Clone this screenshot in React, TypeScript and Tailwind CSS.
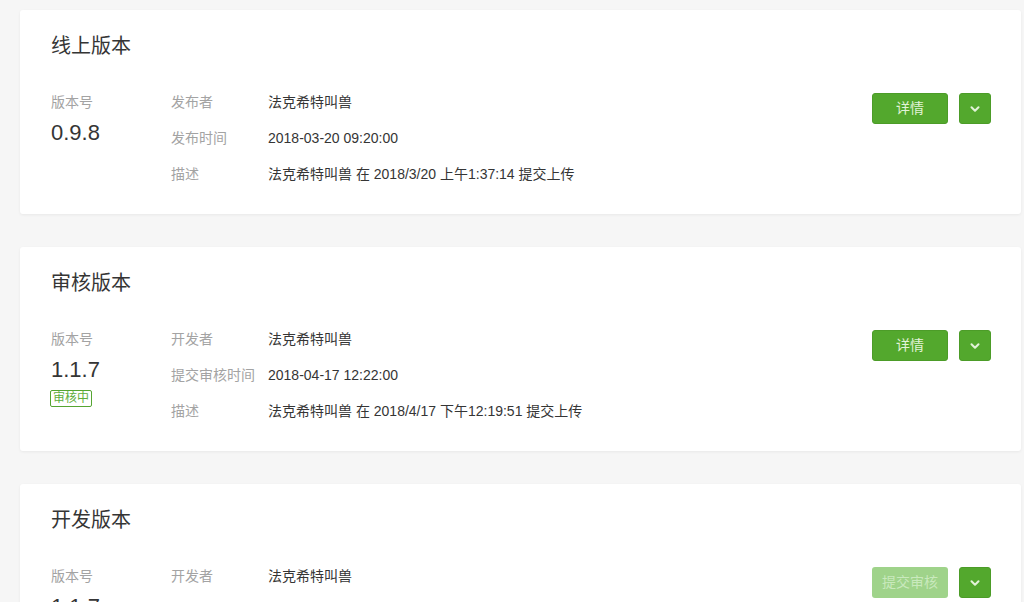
import React from 'react';
import { ChevronDown } from 'lucide-react';

interface Row {
  label: string;
  value: string;
}

interface VersionCard {
  title: string;
  version: string;
  badge?: string;
  rows: Row[];
  action: string;
  disabled?: boolean;
}

const cards: VersionCard[] = [
  {
    title: '线上版本',
    version: '0.9.8',
    rows: [
      { label: '发布者', value: '法克希特叫兽' },
      { label: '发布时间', value: '2018-03-20 09:20:00' },
      { label: '描述', value: '法克希特叫兽 在 2018/3/20 上午1:37:14 提交上传' },
    ],
    action: '详情',
  },
  {
    title: '审核版本',
    version: '1.1.7',
    badge: '审核中',
    rows: [
      { label: '开发者', value: '法克希特叫兽' },
      { label: '提交审核时间', value: '2018-04-17 12:22:00' },
      { label: '描述', value: '法克希特叫兽 在 2018/4/17 下午12:19:51 提交上传' },
    ],
    action: '详情',
  },
  {
    title: '开发版本',
    version: '1.1.7',
    rows: [{ label: '开发者', value: '法克希特叫兽' }],
    action: '提交审核',
    disabled: true,
  },
];

const Card: React.FC<{ card: VersionCard }> = ({ card }) => (
  <section className="bg-white rounded-[3px] shadow-[0_1px_3px_rgba(0,0,0,0.06)] pt-[22px] pb-[30px] pl-[31px] pr-[30px]">
    <h2 className="text-[20px] leading-[28px] text-[#353535]">{card.title}</h2>
    <div className="mt-8 flex items-start">
      <div className="w-[120px] shrink-0">
        <div className="text-[14px] leading-[20px] text-[#a3a3a3]">版本号</div>
        <div className="mt-[6px] text-[22px] leading-[30px] text-[#353535]">{card.version}</div>
        {card.badge && (
          <span className="mt-1 -ml-px inline-block border border-[#55a532] rounded-[2px] px-[2px] text-[12px] leading-[15px] text-[#5fae3c]">
            {card.badge}
          </span>
        )}
      </div>
      <div className="flex-1 flex flex-col gap-4">
        {card.rows.map((row, i) => (
          <div key={i} className="flex text-[14px] leading-[20px]">
            <span className="w-[97px] shrink-0 text-[#a3a3a3]">{row.label}</span>
            <span className="text-[#353535]">{row.value}</span>
          </div>
        ))}
      </div>
      <div className="flex items-center gap-[11px] mt-px">
        <button
          className={
            card.disabled
              ? 'w-[76px] h-[31px] rounded-[3px] bg-[#9fd38a] text-[#c9e9bd] text-[14px]'
              : 'w-[76px] h-[31px] rounded-[3px] bg-[#53a82d] border border-[#4c9c28] text-[#e2f3d8] text-[14px]'
          }
        >
          {card.action}
        </button>
        <button className="w-[32px] h-[31px] rounded-[3px] bg-[#53a82d] border border-[#4c9c28] flex items-center justify-center">
          <ChevronDown size={14} strokeWidth={3.5} className="text-[#e2f3d8]" />
        </button>
      </div>
    </div>
  </section>
);

export default function App() {
  return (
    <div
      className="min-h-screen bg-[#f6f6f6] pt-[10px] pl-[20px] pr-[3px] flex flex-col gap-[33px]"
      style={{ fontFamily: '"Liberation Sans", "Noto Sans CJK SC", sans-serif' }}
    >
      {cards.map((card, i) => (
        <Card key={i} card={card} />
      ))}
    </div>
  );
}
